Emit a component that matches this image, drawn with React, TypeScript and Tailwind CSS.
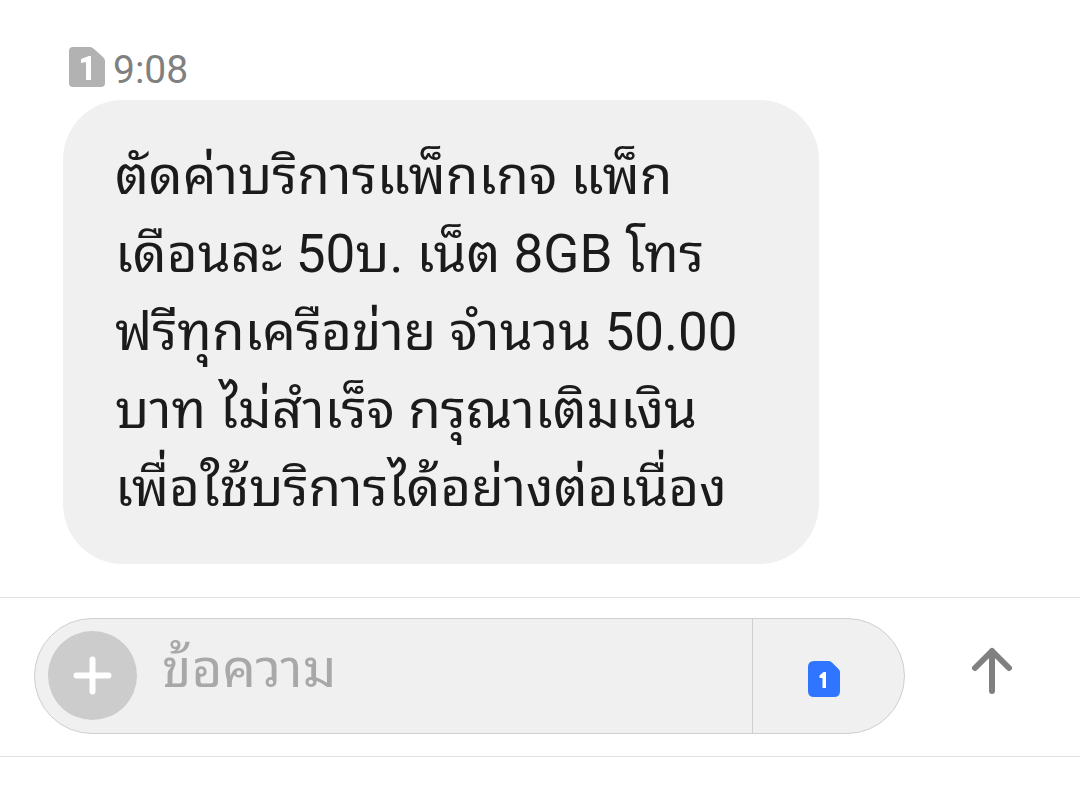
import React from "react";

const lines = [
  "ตัดค่าบริการแพ็กเกจ แพ็ก",
  "เดือนละ 50บ. เน็ต 8GB โทร",
  "ฟรีทุกเครือข่าย จำนวน 50.00",
  "บาท ไม่สำเร็จ กรุณาเติมเงิน",
  "เพื่อใช้บริการได้อย่างต่อเนื่อง",
];

function MessageSim() {
  return (
    <svg width="36" height="40" viewBox="0 0 36 40" role="img" aria-label="SIM 1">
      <path d="M4 0H21Q23 0 25 2L34 10Q36 12 36 14V36Q36 40 32 40H4Q0 40 0 36V4Q0 0 4 0Z" fill="#b2b2b2" />
      <path d="M22 9V33H17V15L12 16V12L20 9Z" fill="white" />
    </svg>
  );
}

function ActiveSim() {
  return (
    <svg width="32" height="36" viewBox="0 0 32 36" aria-hidden="true">
      <path d="M6 0H21Q22.500 0 24 1.500L30.500 8Q32 9.500 32 11V30Q32 36 26 36H6Q0 36 0 30V6Q0 0 6 0Z" fill="#3075ff" />
      <path d="M18 11V27H14.500V17H11.500V14.500L15.500 11Z" fill="white" />
    </svg>
  );
}

function ArrowUp() {
  return (
    <svg width="42" height="48" viewBox="0 0 42 48" fill="none" stroke="#808080" strokeWidth="6" strokeLinecap="round" strokeLinejoin="round" aria-hidden="true">
      <path d="M21 44V4M4 21L21 4L38 21" />
    </svg>
  );
}

export default function App() {
  return (
    <main className="flex min-h-screen flex-col bg-white font-[Roboto,'Noto_Sans_Thai_Looped','Noto_Looped_Thai',Loma,Garuda,Waree,'Noto_Sans',sans-serif] text-[#1b1b1b]">
      <section className="px-[63px] pt-[47px] pb-[33px]">
        <div className="ml-[6px] flex h-[53px] items-start gap-2">
          <MessageSim />
          <time className="text-[39px] leading-[46px] text-[#808080]">9:08</time>
        </div>
        <p className="w-[756px] max-w-full rounded-[60px] bg-[#f0f0f0] px-[52px] py-[37px] text-[53px] leading-[78px]">
          {lines.map((line) => (
            <span key={line} className="block whitespace-nowrap">{line}</span>
          ))}
        </p>
      </section>
      <form className="flex items-start border-y border-[#e1e1e1] pt-5 pb-[22px] pl-[34px]" onSubmit={(e) => e.preventDefault()}>
        <div className="flex h-[116px] min-w-0 flex-1 rounded-full border border-[#cfcfcf] bg-[#f0f0f0]">
          <button type="button" aria-label="+" className="mt-[12px] ml-[13px] grid size-[89px] shrink-0 place-items-center rounded-full bg-[#cccccc]">
            <svg width="39" height="39" viewBox="0 0 39 39" stroke="white" strokeWidth="6" strokeLinecap="round" aria-hidden="true">
              <path d="M19.500 3.500V35.500M3.500 19.500H35.500" />
            </svg>
          </button>
          <input aria-label="ข้อความ" placeholder="ข้อความ" className="min-w-0 flex-1 bg-transparent pb-[12px] pl-[25px] text-[53px] outline-none placeholder:text-[#a8a8a8]" />
          <button type="button" aria-label="SIM 1" className="flex w-[152px] shrink-0 items-center border-l border-[#cfcfcf] pt-[6px] pl-[55px]">
            <ActiveSim />
          </button>
        </div>
        <button type="submit" aria-label="↑" className="flex h-[106px] w-[175px] shrink-0 items-center pl-[66px]"><ArrowUp /></button>
      </form>
    </main>
  );
}
